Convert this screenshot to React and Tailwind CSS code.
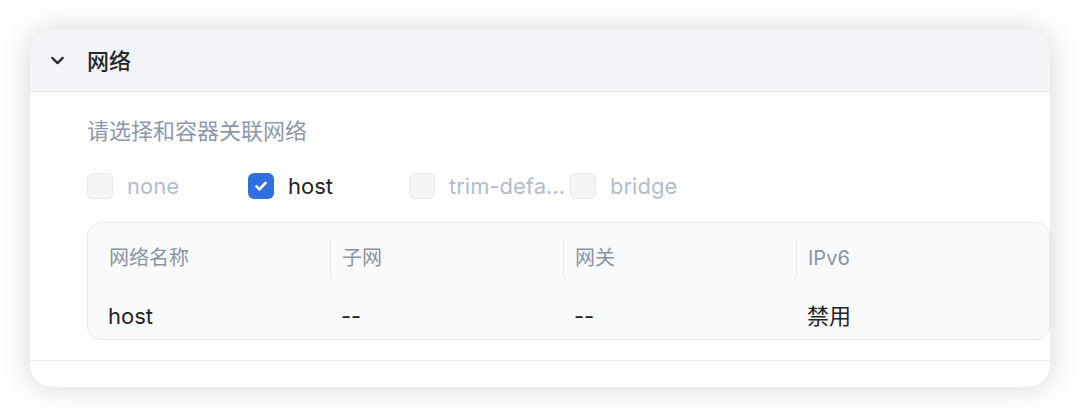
import { ChevronDown } from "lucide-react";

const FONT = { fontFamily: 'Inter, "Noto Sans CJK SC", sans-serif' };

const OPTIONS = [
  { label: "none", checked: false, disabled: true },
  { label: "host", checked: true, disabled: false },
  { label: "trim-default", checked: false, disabled: true },
  { label: "bridge", checked: false, disabled: true },
];

const COLUMNS = ["网络名称", "子网", "网关", "IPv6"];
const ROWS = [["host", "--", "--", "禁用"]];

function Checkbox({ checked }) {
  if (checked) {
    return (
      <span className="w-[26px] h-[26px] shrink-0 rounded-[6px] bg-[#2f6fdf] flex items-center justify-center">
        <svg width="16" height="16" viewBox="0 0 16 16" fill="none">
          <path
            d="M3.5 8.3l3 3 6-6.3"
            stroke="white"
            strokeWidth="2.6"
            strokeLinecap="round"
            strokeLinejoin="round"
          />
        </svg>
      </span>
    );
  }
  return (
    <span className="w-[26px] h-[26px] shrink-0 rounded-[6px] bg-[#f4f5f7] border border-[#e6e8ec]" />
  );
}

export default function App() {
  return (
    <div className="w-[1080px] h-[418px] bg-white p-[30px]" style={FONT}>
      <div className="w-[1020px] h-[357px] rounded-[22px] bg-white overflow-hidden shadow-[0_0_30px_rgba(0,0,0,0.17)] flex flex-col">
        {/* Header */}
        <div className="h-[62px] shrink-0 bg-[#f3f4f7] border-b border-[#e9ebef] flex items-center pl-[17px]">
          <ChevronDown size={21} strokeWidth={2.6} className="text-[#2a2d33]" />
          <span className="ml-[19px] text-[22px] font-medium text-[#24272d] leading-none">
            网络
          </span>
        </div>

        {/* Body */}
        <div className="pl-[57px] pt-[23px]">
          <p className="h-[32px] flex items-center text-[22px] text-[#8e98aa] leading-none">
            请选择和容器关联网络
          </p>

          <div className="mt-[23px] h-[32px] flex items-center">
            {OPTIONS.map((o) => (
              <label key={o.label} className="w-[161px] shrink-0 flex items-center gap-[14px]">
                <Checkbox checked={o.checked} />
                <span
                  className={
                    "max-w-[121px] truncate text-[22px] leading-[32px] " +
                    (o.disabled ? "text-[#b3bccb]" : "text-[#1f2226]")
                  }
                >
                  {o.label}
                </span>
              </label>
            ))}
          </div>

          {/* Table */}
          <div className="mt-[20px] h-[118px] rounded-[14px] border border-[#e6e8ec] bg-[#f9fafc] pl-[9px] pt-[15px]">
            <div className="h-[40px] flex items-center">
              {COLUMNS.map((c, i) => (
                <div
                  key={c}
                  className={
                    "w-[233px] h-[38px] pl-[11px] flex items-center text-[20px] text-[#8b93a2] " +
                    (i > 0 ? "border-l border-[#e3e6ea]" : "border-l border-transparent")
                  }
                >
                  {c}
                </div>
              ))}
            </div>
            {ROWS.map((r, ri) => (
              <div key={ri} className="mt-[16px] h-[44px] flex items-center">
                {r.map((v, i) => (
                  <div
                    key={i}
                    className="w-[233px] pl-[11px] text-[22px] text-[#1f2226]"
                  >
                    {v}
                  </div>
                ))}
              </div>
            ))}
          </div>
        </div>

        <div className="mt-[20px] border-t border-[#e9ebef]" />
      </div>
    </div>
  );
}
